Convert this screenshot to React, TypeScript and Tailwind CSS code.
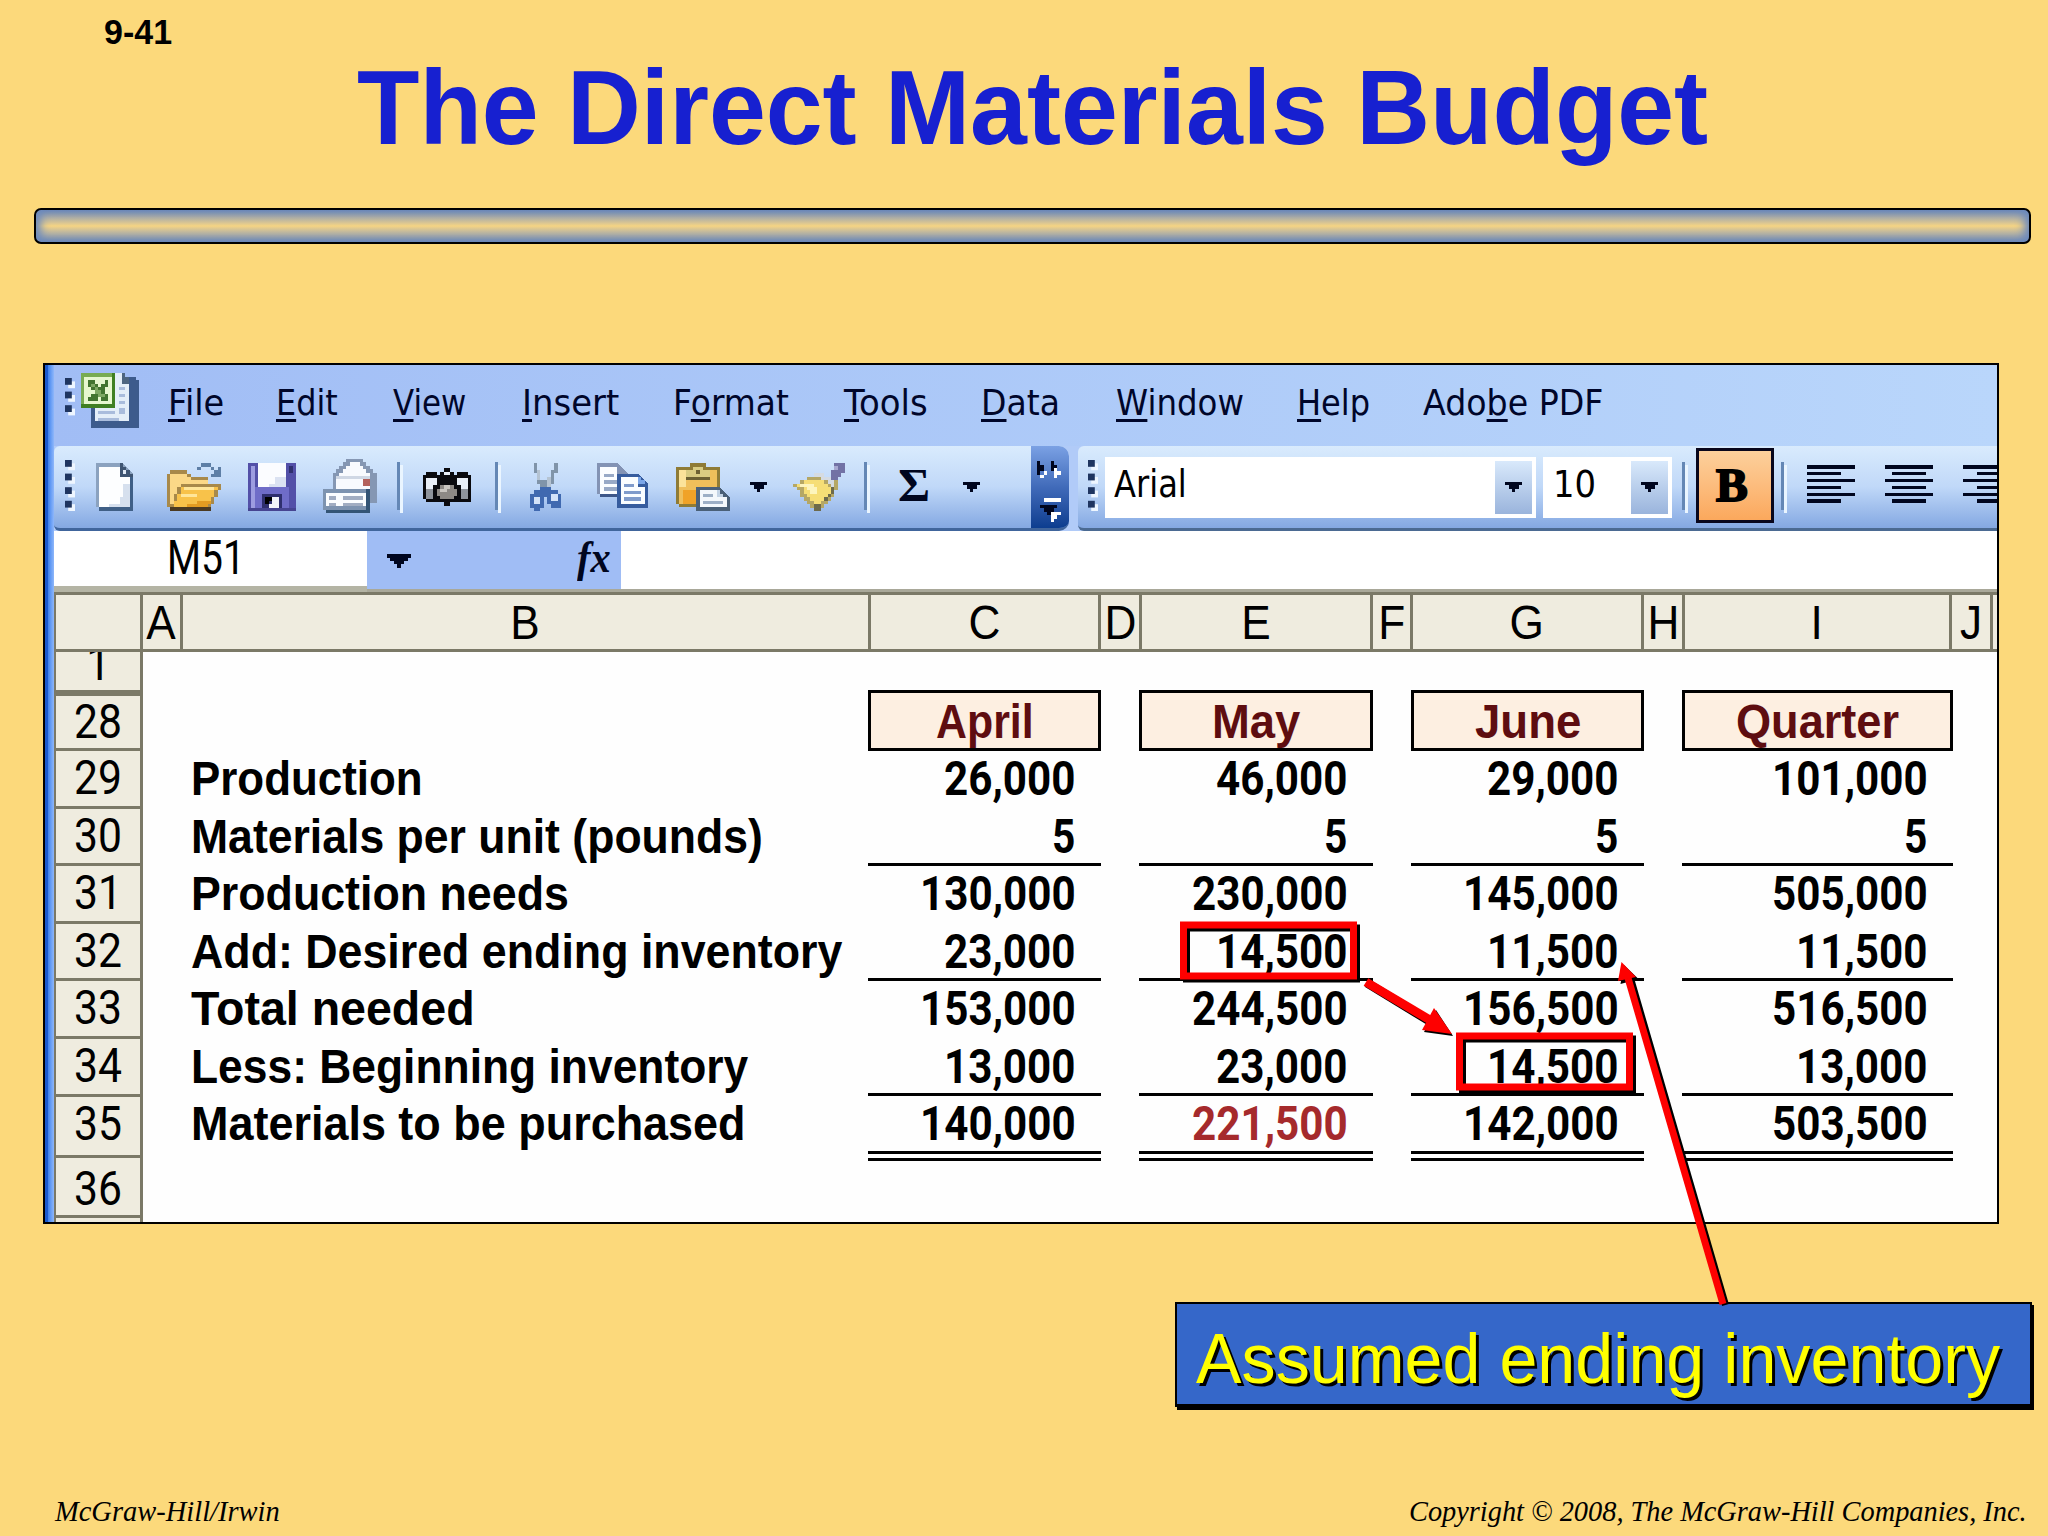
import { ReactNode, useLayoutEffect, useRef, useState } from "react";

type FitProps = { w: number; sy?: number; className?: string; children: ReactNode };

// Stretches a single line of text horizontally to an exact width
const Fit = ({ w, sy = 1, className = "", children }: FitProps) => {
    const ref = useRef<HTMLSpanElement>(null);
    const [scale, setScale] = useState(1);

    useLayoutEffect(() => {
        if (ref.current) {
            setScale(w / ref.current.offsetWidth);
        }
    }, [w, children]);

    return (
        <span className={`block shrink-0 whitespace-nowrap ${className}`} style={{ width: w }}>
            <span
                ref={ref}
                className="inline-block origin-[0_80%]"
                style={{ transform: `scale(${scale}, ${sy})` }}
            >
                {children}
            </span>
        </span>
    );
};

const menuItems = [
    { before: "", key: "F", after: "ile", width: 56, cell: "w-[108px]" },
    { before: "", key: "E", after: "dit", width: 62, cell: "w-[117px]" },
    { before: "", key: "V", after: "iew", width: 73, cell: "w-[129px]" },
    { before: "", key: "I", after: "nsert", width: 97, cell: "w-[151px]" },
    { before: "F", key: "o", after: "rmat", width: 116, cell: "w-[171px]" },
    { before: "", key: "T", after: "ools", width: 84, cell: "w-[137px]" },
    { before: "", key: "D", after: "ata", width: 79, cell: "w-[135px]" },
    { before: "", key: "W", after: "indow", width: 128, cell: "w-[181px]" },
    { before: "", key: "H", after: "elp", width: 73, cell: "w-[126px]" },
    { before: "Ado", key: "b", after: "e PDF", width: 180, cell: "w-[190px]" },
];

const columns = [
    { name: "A", cell: "w-[40px]" },
    { name: "B", cell: "w-[688px]" },
    { name: "C", cell: "w-[230px]" },
    { name: "D", cell: "w-[41px]" },
    { name: "E", cell: "w-[231px]" },
    { name: "F", cell: "w-[40px]" },
    { name: "G", cell: "w-[231px]" },
    { name: "H", cell: "w-[41px]" },
    { name: "I", cell: "w-[267px]" },
    { name: "J", cell: "w-[41px]" },
];

const rowNumbers = [
    { n: "28", cell: "h-[55px] leading-[52px]" },
    { n: "29", cell: "h-[57.5px] leading-[54px]" },
    { n: "30", cell: "h-[57.5px] leading-[54px]" },
    { n: "31", cell: "h-[57.5px] leading-[54px]" },
    { n: "32", cell: "h-[57.5px] leading-[54px]" },
    { n: "33", cell: "h-[58px] leading-[54px]" },
    { n: "34", cell: "h-[57.5px] leading-[54px]" },
    { n: "35", cell: "h-[61px] leading-[54px]" },
    { n: "36", cell: "h-[60.5px] pt-[4px] leading-[54px]" },
];

const labels = [
    { text: "Production", width: 232 },
    { text: "Materials per unit (pounds)", width: 572 },
    { text: "Production needs", width: 378 },
    { text: "Add: Desired ending inventory", width: 651 },
    { text: "Total needed", width: 284 },
    { text: "Less: Beginning inventory", width: 557 },
    { text: "Materials to be purchased", width: 555 },
];

const periods = [
    { name: "April", nameWidth: 98, cell: "w-[233px]", values: ["26,000", "5", "130,000", "23,000", "153,000", "13,000", "140,000"] },
    { name: "May", nameWidth: 88, cell: "ml-[38px] w-[234px]", values: ["46,000", "5", "230,000", "14,500", "244,500", "23,000", "221,500"] },
    { name: "June", nameWidth: 106, cell: "ml-[38px] w-[233px]", values: ["29,000", "5", "145,000", "11,500", "156,500", "14,500", "142,000"] },
    { name: "Quarter", nameWidth: 163, cell: "ml-[38px] w-[271px]", values: ["101,000", "5", "505,000", "11,500", "516,500", "13,000", "503,500"] },
];

const valueCells = [
    "h-[57.5px]",
    "h-[57.5px] border-b-3",
    "h-[57.5px]",
    "h-[57.5px] border-b-3",
    "h-[57.5px]",
    "h-[57.5px] border-b-3",
    "h-[65px] border-b-10 border-double",
];

const numberWidth = (text: string) => text.split("").reduce((sum, c) => sum + (c === "," ? 13.4 : 23.7), 0);

const Grip = ({ dots }: { dots: number }) => (
    <svg width="10" height={dots * 13.6} viewBox={`0 0 10 ${dots * 13.6}`} className="shrink-0">
        {Array.from({ length: dots }).map((_, i) => (
            <g key={i}>
                <rect x="3.2" y={i * 13.6 + 3.4} width="6.8" height="6.8" fill="#eef6ff" />
                <rect x="0" y={i * 13.6} width="6.8" height="6.8" fill="#1f3560" />
            </g>
        ))}
    </svg>
);

const Separator = ({ className }: { className: string }) => (
    <div className={`flex h-[51px] w-1.5 shrink-0 ${className}`}>
        <div className="h-12 w-[3px] bg-[#6487b5]" />
        <div className="mt-[3px] h-12 w-[3px] bg-[#eaf5ff]" />
    </div>
);

const Caret = ({ className = "" }: { className?: string }) => (
    <svg width="17" height="10" viewBox="0 0 5 3" shapeRendering="crispEdges" className={`shrink-0 ${className}`}>
        <path d="M0 0h5v1H4v1H3v1H2V2H1V1H0z" fill="#00061f" />
    </svg>
);

const ExcelIcon = () => (
    <svg width="58" height="58" viewBox="0 0 17 17" shapeRendering="crispEdges" className="ml-[11px] shrink-0">
        <path d="M3 4h11V2h2v1h1v14H3z" fill="#3d5b8c" />
        <path d="M4 1h9v2h1v12H4z" fill="#e4eef8" />
        <path d="M12 1h1v1h1v2h-2z" fill="#4d6580" />
        <path d="M5 12h5v1H5zM5 14h6v1H5zM11 11h2v2h-2zM11 5h2v1h-2zM11 7h2v1h-2zM11 9h2v1h-2z" fill="#a9bcdc" />
        <path d="M0 1h10v10H0z" fill="#3f7f22" />
        <path d="M0 1h9v9H0z" fill="#78ab52" />
        <path d="M1 2h8v8H1z" fill="#e6f7cf" />
        <path d="M2 3h2v1h1v1h1V4h1V3h1v2H7v2h1v2H6V8H5v1H2V8h1V7h1V6H3V5H2z" fill="#427530" />
        <path d="M3 4h1v1h1v1h1v1h1v1H5V7H4V5H3z" fill="#7da863" />
    </svg>
);

const NewIcon = () => (
    <svg width="37" height="48" viewBox="0 0 11 14" shapeRendering="crispEdges" className="ml-[21px] shrink-0">
        <path d="M0 0h8l3 3v11H1v-1H0z" fill="#8ba2bf" />
        <path d="M1 1h6v3h3v9H1z" fill="#fdfeff" />
        <path d="M8 6h2v7H4v-1h3v-2h1z" fill="#d6e0ee" />
        <path d="M7 0h1v1h1v1h1v1h1v1H7z" fill="#3f5572" />
        <path d="M8 2h1v1H8z" fill="#dfe9f5" />
        <path d="M1 13h10v1H1zM10 4h1v10h-1z" fill="#3f5f86" />
    </svg>
);

const OpenIcon = () => (
    <svg width="54" height="48" viewBox="0 0 16 14" shapeRendering="crispEdges" className="ml-[34px] shrink-0">
        <path d="M0 3h1V2h5v1h1v1h5v2h4v2h-1v2h-1v2h-1v2H1v-1H0z" fill="#a8894a" />
        <path d="M1 3h5v1h1v1h5v1H4v1H3v2H2v3H1z" fill="#fbd887" />
        <path d="M4 7h11v1h-1v2h-1v2h-1v1H2v-2h1V9h1z" fill="#f8c24a" />
        <path d="M5 7h9v1H5zM4 9h5v1H4z" fill="#ffe69a" />
        <path d="M9 11h4v1h-1v1H6v-1h3z" fill="#e39c22" />
        <path d="M1 13h12v1H1z" fill="#4b3a22" />
        <path d="M9 1h1V0h3v1h1v1h1V1h1v3h-3V3h1V2h-1V1h-3v1H9z" fill="#5e7fa6" />
    </svg>
);

const SaveIcon = () => (
    <svg width="48" height="48" viewBox="0 0 14 14" shapeRendering="crispEdges" className="ml-[27px] shrink-0">
        <path d="M0 0h14v14H1v-1H0z" fill="#5350a8" />
        <path d="M1 1h1v12H1z" fill="#9d9ce0" />
        <path d="M2 7h10v6H2z" fill="#6f6cc8" />
        <path d="M3 0h8v7H3z" fill="#fbfcff" />
        <path d="M8 4h3v3H6V6h2z" fill="#dbe2f2" />
        <path d="M12 1h1v2h-1zM4 9h6v4H4z" fill="#2f2f6e" />
        <path d="M5 10h2v1H6v1H5z" fill="#000" />
        <path d="M7 10h2v3H6v-1h1z" fill="#f3f4fa" />
        <path d="M0 13h14v1H0z" fill="#464491" />
    </svg>
);

const MailIcon = () => (
    <svg width="55" height="54" viewBox="0 0 16 16" shapeRendering="crispEdges" className="mb-[2px] ml-[26px] shrink-0">
        <path d="M3 4h1V3h1V2h1V1h1V0h5v1h1v1h1v1h1v1h1v9h-2v1H3z" fill="#8597b3" />
        <path d="M4 5h1V4h1V3h1V2h1V1h3v1h1v1h1v1h1v7H4z" fill="#f8fafe" />
        <path d="M4 5h10v1H4z" fill="#cfd7e4" />
        <path d="M12 6h2v2h-2z" fill="#b3615c" />
        <path d="M0 9h14v6H0z" fill="#7d93b0" />
        <path d="M1 10h12v4H1z" fill="#fbfdff" />
        <path d="M2 11h2v1H2zM2 13h2v1H2zM6 11h6v1H6zM6 13h6v1H6z" fill="#a1adc2" />
        <path d="M1 15h13v1H1zM13 9h1v7h-1z" fill="#335475" />
    </svg>
);

const CameraIcon = () => (
    <svg width="48" height="38" viewBox="0 0 14 11" shapeRendering="crispEdges" className="ml-[20px] shrink-0">
        <path d="M0 2h1V1h3v1h1V1h1V0h2v1h1v1h1V1h3v1h1v8H8v1H6v-1H1V9H0z" fill="#0a0a0e" />
        <path d="M6 1h2v1H6zM1 3h3v2H3v3H1zM10 3h3v5h-2V5h-1z" fill="#e8eef6" />
        <path d="M1 6h2v3H1zM11 6h2v3h-2z" fill="#8f949c" />
        <path d="M5 5h4v1h1v2H9v1H5V8H4V6h1z" fill="#8d8985" />
        <path d="M6 5h2v1H7v1H5V6h1z" fill="#c9c5c0" />
    </svg>
);

const CutIcon = () => (
    <svg width="31" height="48" viewBox="0 0 9 14" shapeRendering="crispEdges" className="ml-[29px] shrink-0">
        <path d="M1 0h1v2h1v3h3V2h1V0h1v3H7v3H6v2H3V6H2V3H1z" fill="#8094a9" />
        <path d="M2 2h1v3H2zM5 4h1v3H5z" fill="#b5c3d2" />
        <path d="M3 7h3v1h2v1h1v4H6v-1H5v-2H4v3H3v1H1v-1H0V9h1V8h2z" fill="#4069b0" />
        <path d="M1 10h2v2H1zM6 9h2v2H6z" fill="#d3e2f8" />
    </svg>
);

const CopyIcon = () => (
    <svg width="51" height="45" viewBox="0 0 15 13" shapeRendering="crispEdges" className="mb-[3px] ml-[36px] shrink-0">
        <path d="M0 0h6l3 3v7H1V9H0z" fill="#8393b4" />
        <path d="M1 1h5v2h2v6H1z" fill="#fbfdff" />
        <path d="M2 3h3v1H2zM2 5h4v1H2zM2 7h4v1H2z" fill="#98a9c6" />
        <path d="M1 9h6v1H1z" fill="#3d5688" />
        <path d="M6 3h6l3 3v7H6z" fill="#365c9e" />
        <path d="M7 4h5v3h2v5H7z" fill="#fafdff" />
        <path d="M12 4h1v1h1v1h-2z" fill="#7ba6e8" />
        <path d="M8 6h3v1H8zM8 8h5v1H8zM8 10h5v1H8z" fill="#7f9bcb" />
    </svg>
);

const PasteIcon = () => (
    <svg width="54" height="48" viewBox="0 0 16 14" shapeRendering="crispEdges" className="ml-[28px] shrink-0">
        <path d="M0 1h4V0h5v1h4v7h-1v5H1v-1H0z" fill="#8f7b36" />
        <path d="M1 2h11v8H7v2H1z" fill="#efbf5b" />
        <path d="M1 2h2v5H1z" fill="#fbe39a" />
        <path d="M2 8h4v4H2z" fill="#f0a227" />
        <path d="M3 2h2V1h3v1h2v2H3z" fill="#d9cc82" />
        <path d="M3 4h7v1H3zM6 2h1v1H6z" fill="#6c6133" />
        <path d="M6 7h7l3 3v4H6z" fill="#4a6078" />
        <path d="M7 8h5v2h3v3H7z" fill="#f4f8fc" />
        <path d="M12 8h1v1h1v1h-2z" fill="#c4d4e6" />
        <path d="M8 9h3v1H8zM8 11h6v1H8z" fill="#9dafc6" />
    </svg>
);

const BrushIcon = () => (
    <svg width="52" height="48" viewBox="0 0 15 14" shapeRendering="crispEdges" className="ml-[26px] shrink-0">
        <path d="M12 0h3v3h-1v1h-1v1h-2V2h1z" fill="#7272a5" />
        <path d="M12 1h1v1h-1z" fill="#a8a8d0" />
        <path d="M0 6h2V5h2V4h2V3h3v1h2v1h2v3h-1v2h-1v1h-1v1H9v1H8v1H6v-1H5v-1H4v-1H3v-1H2V8H1V7H0z" fill="#b5a765" />
        <path d="M1 6h2V5h6v1h1v1h1v2h-1v1H9v1H8v1H6v-1H5v-1H4V9H3V7H1z" fill="#f6de76" />
        <path d="M2 6h4v1h1v2H5V8H4V7H2z" fill="#fdf5bd" />
        <path d="M6 3h3v1h2v1h1v2h-1V6h-1V5H8V4H6z" fill="#d5dbe2" />
        <path d="M11 7h1v2h-1v1h-1v1H9v-1h1V9h1zM6 12h2v2H6z" fill="#6d6a4c" />
    </svg>
);

const AlignIcon = ({ short, className }: { short: number; className: string }) => (
    <svg width="48" height="38" viewBox="0 0 14 11" shapeRendering="crispEdges" className={`mb-[6px] shrink-0 ${className}`}>
        {[0, 4, 8].map(y => (
            <g key={y} fill="#00061f">
                <rect x="0" y={y} width="14" height="1" />
                <rect x={short} y={y + 2} width="10" height="1" />
            </g>
        ))}
    </svg>
);

const MenuBar = () => (
    <div className="flex h-[81px] items-start bg-linear-to-r from-[#a1bdf5] to-[#b9d6fb] pt-[5px] pl-[11px]">
        <div className="mt-[8px]"><Grip dots={3} /></div>
        <div className="-ml-[5px] w-[99px]"><ExcelIcon /></div>
        <div className="-ml-[1px] flex pt-[10px] font-['DejaVu_Sans'] text-[36px] leading-[46px] text-[#00062a]">
            {menuItems.map(item => (
                <div key={item.key + item.after} className={item.cell}>
                    <Fit w={item.width}>
                        {item.before}
                        <span className="underline decoration-[3px] underline-offset-[4px]">{item.key}</span>
                        {item.after}
                    </Fit>
                </div>
            ))}
        </div>
    </div>
);

const Toolbars = () => (
    <div className="flex h-[85px] bg-[#b1cbf8]">
        <div className="flex h-full w-[1015px] items-center overflow-hidden rounded-r-[10px] rounded-l-[6px] border-b-3 border-[#40659c] bg-linear-to-b from-[#d9ebfd] via-[#c0d8f8] to-[#84a8e2]">
            <div className="ml-[11px]"><Grip dots={4} /></div>
            <NewIcon />
            <OpenIcon />
            <SaveIcon />
            <MailIcon />
            <Separator className="ml-[20px]" />
            <CameraIcon />
            <Separator className="ml-[24px]" />
            <CutIcon />
            <CopyIcon />
            <PasteIcon />
            <Caret className="ml-[20px]" />
            <BrushIcon />
            <Separator className="ml-[19px]" />
            <Fit w={32} className="mb-[2px] ml-[28px] font-['Liberation_Serif'] text-[46px] leading-[50px] font-bold text-[#00061f]">Σ</Fit>
            <Caret className="ml-[33px]" />
            <div className="-mb-[3px] ml-auto flex h-[85px] w-[38px] items-center justify-center bg-linear-to-b from-[#7ba1e4] via-[#3f69b8] to-[#073a8c] pt-[5px]">
                <svg width="27" height="61" viewBox="0 0 8 18" shapeRendering="crispEdges">
                    <path d="M1 2h1v1H1v1h1V3h1v1H2v1H1zM5 2h1v1h1v1H6v1H5zM2 11h5v1H2zM4 15h3v1H6v1H5v1H4z" fill="#fff" />
                    <path d="M0 0h1v1h1v1h1v0H2v1H1v1H0zM4 0h1v1h1v1H5v1H4zM1 13h5v1H5v1H4v1H3v-1H2v-1H1z" fill="#00061f" />
                </svg>
            </div>
        </div>
        <div className="ml-[9px] flex h-full min-w-0 flex-1 items-center overflow-hidden rounded-l-[6px] border-b-3 border-[#4b6a92] bg-linear-to-b from-[#d9ebfd] via-[#c0d8f8] to-[#84a8e2]">
            <div className="ml-[10px]"><Grip dots={4} /></div>
            <div className="ml-[7px] flex h-[61px] w-[431px] shrink-0 justify-between border-4 border-white bg-white">
                <Fit w={73} className="ml-[5px] font-['DejaVu_Sans'] text-[37px] leading-[47px] text-black">Arial</Fit>
                <div className="flex w-[37px] items-center justify-center bg-linear-to-b from-[#d9e9fb] to-[#9ab4dc]"><Caret /></div>
            </div>
            <div className="ml-[7px] flex h-[61px] w-[129px] shrink-0 justify-between border-4 border-white bg-white">
                <Fit w={43} className="ml-[6px] font-['DejaVu_Sans'] text-[37px] leading-[47px] text-black">10</Fit>
                <div className="flex w-[37px] items-center justify-center bg-linear-to-b from-[#d9e9fb] to-[#9ab4dc]"><Caret /></div>
            </div>
            <Separator className="ml-[10px]" />
            <div className="mb-[3px] ml-[8px] flex h-[75px] w-[78px] shrink-0 items-center justify-center border-3 border-[#08061c] bg-linear-to-b from-[#fcd09c] to-[#fba85c] pr-[6px]">
                <Fit w={32} className="font-['Liberation_Serif'] text-[46px] leading-[50px] font-bold text-black [-webkit-text-stroke:2px_black]">B</Fit>
            </div>
            <Separator className="ml-[7px]" />
            <AlignIcon short={0} className="ml-[20px]" />
            <AlignIcon short={2} className="ml-[30px]" />
            <AlignIcon short={4} className="ml-[30px]" />
        </div>
    </div>
);

const FormulaBar = () => (
    <div className="flex h-[64px] border-b-3 border-[#7b7967] bg-[#a0bdf5] text-black">
        <div className="h-[61px] w-[313px] border-b-6 border-[#b4b4a4] bg-white pt-[1px] pl-[113px] font-['Roboto'] text-[48px] leading-[52px]">
            <Fit w={78}>M51</Fit>
        </div>
        <div className="flex w-[254px] items-start border-b-3 border-[#a9a899]">
            <svg width="24" height="14" viewBox="0 0 7 4" shapeRendering="crispEdges" className="mt-[23px] ml-[20px]">
                <path d="M0 0h7v1H6v1H5v1H4v1H3V3H2V2H1V1H0z" fill="#00061f" />
            </svg>
            <Fit w={34} className="mt-[3px] ml-[166px] font-['Liberation_Serif'] text-[44px] leading-[48px] font-bold text-[#00061f] italic">fx</Fit>
        </div>
        <div className="flex-1 border-b-3 border-[#a9a899] bg-white" />
    </div>
);

const ColumnHeads = () => (
    <div className="flex h-[57px] border-b-3 border-[#7b7967] bg-[#efecdf] font-['Liberation_Sans'] text-[48px] leading-[56px] text-black">
        <div className="w-[89px] shrink-0 border-r-3 border-l-2 border-[#7b7967]" />
        {columns.map(column => (
            <div key={column.name} className={`flex shrink-0 justify-center border-r-3 border-[#7b7967] ${column.cell}`}>
                <span className="inline-block scale-x-[.92]">{column.name}</span>
            </div>
        ))}
    </div>
);

const Sheet = () => (
    <div className="flex flex-1 font-['Liberation_Sans'] text-black">
        <div className="flex w-[89px] shrink-0 flex-col border-r-3 border-l-2 border-[#7b7967] bg-[#efecdf] font-['Roboto'] text-[48px]">
            <div className="flex h-[44px] items-start justify-center overflow-hidden border-b-6 border-[#7b7967] leading-[24px]">
                <span className="inline-block scale-x-[.9]">1</span>
            </div>
            {rowNumbers.map(row => (
                <div key={row.n} className={`flex justify-center border-b-3 border-[#7b7967] ${row.cell}`}>
                    <Fit w={48}>{row.n}</Fit>
                </div>
            ))}
        </div>
        <div className="w-[725px] shrink-0 bg-[#fefefe] pt-[99px] pl-[48px] text-[49px] leading-[55px] font-bold">
            {labels.map(label => (
                <div key={label.text} className="h-[57.5px]">
                    <Fit w={label.width}>{label.text}</Fit>
                </div>
            ))}
        </div>
        <div className="flex flex-1 bg-[#fefefe] pt-[38px] text-[49px] leading-[56px] font-bold">
            {periods.map(period => (
                <div key={period.name} className={`shrink-0 ${period.cell}`}>
                    <div className="flex h-[61px] justify-center border-3 border-black bg-[#fdefe1] text-[#5e0d10]">
                        <Fit w={period.nameWidth}>{period.name}</Fit>
                    </div>
                    {period.values.map((value, i) => (
                        <div key={i} className={`flex justify-end border-black pr-[25px] font-['Roboto'] text-[48px] leading-[55px] ${valueCells[i]}`}>
                            <Fit w={numberWidth(value)} className={value === "221,500" ? "text-[#a52a2c]" : ""}>{value}</Fit>
                        </div>
                    ))}
                </div>
            ))}
        </div>
    </div>
);

// Red frames and arrows drawn over the worksheet
const Annotations = () => (
    <svg width="2048" height="1536" viewBox="0 0 2048 1536" className="absolute top-0 left-0">
        <g stroke="#000" fill="none">
            <rect x="1186.5" y="928" width="170" height="51" strokeWidth="7" />
            <rect x="1462.5" y="1039" width="170" height="51" strokeWidth="7" />
            <path d="M1631 980L1725.5 1305" strokeWidth="7" />
            <path d="M1367 983L1431 1022" strokeWidth="9" />
        </g>
        <path d="M1436 1010L1453 1036L1424 1032z" />
        <path d="M1624 965L1638.500 979L1620.500 984z" />
        <g stroke="#fe0000" fill="none">
            <rect x="1183.500" y="925" width="170" height="51" strokeWidth="7" />
            <rect x="1459.500" y="1036" width="170" height="51" strokeWidth="7" />
            <path d="M1628 978L1723 1304" strokeWidth="7" />
            <path d="M1366 982L1430 1020" strokeWidth="9" />
        </g>
        <g fill="#fe0000">
            <path d="M1434 1008L1452 1034L1422 1030z" />
            <path d="M1621.500 962L1636 977L1618 981z" />
        </g>
    </svg>
);

export default function App() {
    return (
        <div className="relative flex h-[1536px] w-[2048px] flex-col overflow-hidden bg-[#fcd97b] font-['Liberation_Sans']">
            <header className="flex h-[208px] flex-col font-bold">
                <div className="ml-[104px] h-[52px] pt-[12px] text-[34px] leading-[40px] text-black">
                    <Fit w={68} sy={1.03}>9-41</Fit>
                </div>
                <h1 className="ml-[357px] text-[102.4px] leading-[114px] text-[#1720d0]">
                    <Fit w={1351} sy={1.04}>The Direct Materials Budget</Fit>
                </h1>
            </header>
            <div className="ml-[34px] h-9 w-[1997px] rounded-[7px] border-2 border-black bg-linear-to-b from-[#6c86b6] via-[#f5d483] to-[#6c86b6] shadow-[inset_8px_0_8px_-3px_#6c8abd,inset_-8px_0_8px_-3px_#6c8abd]" />

            <div className="mt-[119px] ml-[43px] flex h-[861px] w-[1956px] overflow-hidden border-2 border-black">
                <div className="w-[9px] shrink-0 border-l-3 border-[#1a5ad0] bg-linear-to-r from-[#3e83ee] to-[#8fb7fa]" />
                <div className="flex min-w-0 flex-1 flex-col overflow-hidden">
                    <MenuBar />
                    <Toolbars />
                    <FormulaBar />
                    <ColumnHeads />
                    <Sheet />
                </div>
            </div>

            <div className="mt-[78px] ml-[1175px] h-[105px] w-[857px] border-2 border-b-3 border-black bg-[#3567c9] pt-[16px] pl-[19px] text-[69px] leading-[80px] text-[#ffff00] shadow-[2px_3px_0_#000] [text-shadow:3px_3px_0_#000]">
                <Fit w={804} sy={1.03}>Assumed ending inventory</Fit>
            </div>

            <footer className="mt-auto flex h-[50px] justify-between pr-[21px] pl-[55px] font-['Liberation_Serif'] text-[30px] leading-[50px] text-black italic">
                <Fit w={225}>McGraw-Hill/Irwin</Fit>
                <Fit w={618}>Copyright © 2008, The McGraw-Hill Companies, Inc.</Fit>
            </footer>
            <Annotations />
        </div>
    );
}
